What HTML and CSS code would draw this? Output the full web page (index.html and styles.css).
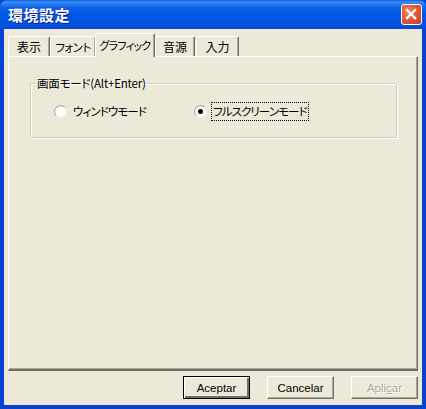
FILE: index.html
```html
<!DOCTYPE html>
<html lang="ja">
<head>
<meta charset="utf-8">
<title>環境設定</title>
<link rel="stylesheet" href="styles.css">
</head>
<body>
<div class="window">
  <div class="titlebar">
    <span class="title">環境設定</span>
    <button class="close" aria-label="閉じる">
      <svg width="21" height="21" viewBox="0 0 21 21"><path d="M5.5 5.5 L14.5 14.5 M14.5 5.5 L5.5 14.5" stroke="#fff" stroke-width="2.4" stroke-linecap="square" fill="none"/></svg>
    </button>
  </div>
  <div class="client">
    <div class="tabs">
      <div class="tab t1">表示</div>
      <div class="tab t2">フォント</div>
      <div class="tab t3 active">グラフィック</div>
      <div class="tab t4">音源</div>
      <div class="tab t5">入力</div>
    </div>
    <div class="panel">
      <fieldset class="group">
        <legend>画面モード(Alt+Enter)</legend>
        <div class="radios">
          <label class="radio r1"><span class="circle"></span><span class="rtext">ウィンドウモード</span></label>
          <label class="radio r2"><span class="circle checked"></span><span class="rtext focus">フルスクリーンモード</span></label>
        </div>
      </fieldset>
    </div>
    <div class="buttons">
      <button class="btn default">Aceptar</button>
      <button class="btn">Cancelar</button>
      <button class="btn disabled">Apli<u>c</u>ar</button>
    </div>
  </div>
</div>
</body>
</html>
```
FILE: styles.css
```css
html, body {
  margin: 0;
  padding: 0;
  background: #0055e5;
}
.window {
  width: 426px;
  height: 409px;
  display: flex;
  flex-direction: column;
  background: #0842d2;
  overflow: hidden;
}
.titlebar {
  height: 29px;
  flex: none;
  display: flex;
  align-items: center;
  justify-content: space-between;
  padding: 0 4px 0 8px;
  box-sizing: border-box;
  border-radius: 7px 7px 0 0;
  background: linear-gradient(to bottom, #0a5ee0 0px, #3d8ff5 2px, #2a7bf0 4px, #0b5fe8 8px, #0057e6 14px, #0054e3 22px, #0550dc 26px, #0a48d0 29px);
}
.title {
  color: #fff;
  font-family: "Noto Sans CJK JP", sans-serif;
  font-weight: bold;
  font-size: 15px;
  line-height: 18px;
  letter-spacing: 0.5px;
  text-shadow: 1px 1px 0 #0a1f8a;
  margin-top: 1px;
}
.close {
  width: 21px;
  height: 21px;
  padding: 0;
  border: 1px solid #fff;
  border-radius: 3px;
  box-sizing: border-box;
  background: radial-gradient(circle at 35% 35%, #f08a6c 0%, #e3593a 45%, #c8401f 100%);
  display: flex;
  align-items: center;
  justify-content: center;
  margin-top: -1px;
}
.close svg {
  width: 19px;
  height: 19px;
}
.client {
  flex: 1;
  margin: 0 4px 4px 4px;
  background: #ece9d8;
  padding: 5px 4px 0 4px;
  display: flex;
  flex-direction: column;
  font-family: "Noto Sans CJK JP", sans-serif;
  font-size: 11px;
  color: #000;
}
.tabs {
  display: flex;
  align-items: flex-end;
  height: 22px;
  position: relative;
  z-index: 2;
}
.tab {
  height: 20px;
  box-sizing: border-box;
  border-top: 1px solid #fff;
  border-left: 1px solid #fff;
  border-right: 1px solid #716f64;
  box-shadow: inset -1px 0 0 #aca899;
  border-radius: 2px 2px 0 0;
  display: flex;
  align-items: center;
  justify-content: center;
  font-feature-settings: "palt";
  font-size: 12px;
  line-height: 14px;
  white-space: nowrap;
  background: #ece9d8;
  padding-top: 1px;
}
.t1 { width: 42px; }
.t2 { width: 46px; letter-spacing: -0.6px; font-size: 11.5px; }
.t4 { width: 40px; margin-left: 1px; }
.t5 { width: 43px; margin-left: 1px; }
.tab.active {
  width: 60px;
  height: 24px;
  margin-bottom: -1px;
  margin-left: -1px;
  margin-right: -1px;
  padding-bottom: 3px;
  font-size: 11px;
  letter-spacing: -0.7px;
}
.panel {
  height: 315px;
  box-sizing: border-box;
  border-top: 1px solid #fff;
  border-left: 1px solid #fff;
  border-right: 1px solid #716f64;
  border-bottom: 2px solid #716f64;
  box-shadow: inset -1px -1px 0 #aca899;
  padding: 18px 20px 0 21px;
  position: relative;
  z-index: 1;
}
.group {
  margin: 0;
  padding: 0;
  height: 63px;
  box-sizing: border-box;
  border: 1px solid #d0d0bf;
  box-shadow: inset 1px 1px 0 #fff, 1px 1px 0 #fff;
}
.group legend {
  margin-left: 5px;
  padding: 0 1px;
  font-size: 11.5px;
  line-height: 16px;
  letter-spacing: -0.2px;
  font-feature-settings: "palt";
}
.radios {
  display: flex;
  align-items: center;
  padding: 11px 0 0 23px;
}
.radio {
  display: flex;
  align-items: center;
  font-feature-settings: "palt";
  font-size: 11.5px;
  letter-spacing: -0.9px;
  line-height: 15px;
  white-space: nowrap;
}
.r1 { width: 140px; }
.circle {
  width: 13px;
  height: 13px;
  border-radius: 50%;
  box-sizing: border-box;
  background: radial-gradient(circle at 60% 60%, #ffffff 0%, #ffffff 40%, #e6e3d6 100%);
  border: 1px solid;
  border-color: #aca899 #f1efe2 #f1efe2 #aca899;
  position: relative;
  margin-right: 4px;
  flex: none;
}
.circle.checked::after {
  content: "";
  position: absolute;
  left: 3px;
  top: 3px;
  width: 5px;
  height: 5px;
  border-radius: 50%;
  background: #000;
}
.rtext {
  padding: 1px 1px;
  border: 1px dotted transparent;
}
.rtext.focus {
  border-color: #000;
}
.buttons {
  display: flex;
  justify-content: flex-end;
  gap: 17px;
  padding-top: 5px;
}
.btn {
  width: 67px;
  height: 23px;
  box-sizing: border-box;
  font-family: "Liberation Sans", Arial, sans-serif;
  font-size: 11.5px;
  color: #000;
  background: #ece9d8;
  border: 1px solid;
  border-color: #fff #716f64 #716f64 #fff;
  box-shadow: inset -1px -1px 0 #aca899;
  padding: 0;
}
.btn.default {
  border: 1px solid #000;
  box-shadow: inset 1px 1px 0 #fff, inset -2px -2px 0 #716f64, inset -1px -1px 0 #aca899;
}
.btn.disabled {
  color: #aca899;
  text-shadow: 1px 1px 0 #fff;
}
.btn u {
  text-decoration: underline;
}
```
